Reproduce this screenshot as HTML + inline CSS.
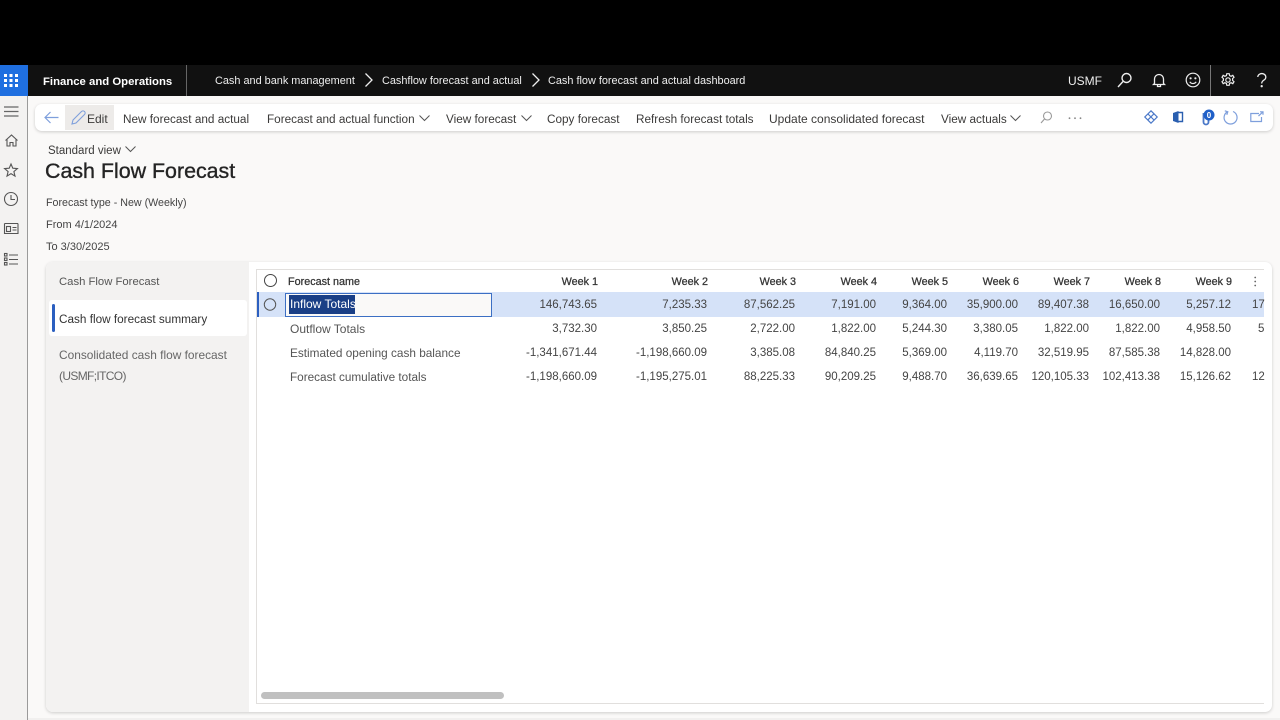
<!DOCTYPE html>
<html><head><meta charset="utf-8"><style>
html,body{margin:0;padding:0;width:1280px;height:720px;overflow:hidden;background:#000}
body{position:relative;font-family:"Liberation Sans",sans-serif;font-size:12px;color:#333}
.a{position:absolute}
.t{position:absolute;white-space:nowrap;line-height:16px;height:16px}
.n{position:absolute;white-space:nowrap;line-height:16px;height:16px;text-align:right;color:#444;width:110px;font-size:11.500px;margin-top:1px}
.h{position:absolute;white-space:nowrap;line-height:16px;height:16px;text-align:right;color:#333;width:80px;font-size:10.800px;-webkit-text-stroke:.25px #333}
.w{color:#eee;font-size:10.900px}
.c{color:#3b3a39;font-size:11.750px}
svg{position:absolute;overflow:visible;fill:none}
</style></head><body>
<!-- page -->
<div class="a" style="left:0;top:65px;width:1280px;height:655px;background:#faf9f8"></div>
<div class="a" style="left:28px;top:718px;width:1252px;height:2px;background:#f1f0ef"></div>
<!-- top bar -->
<div class="a" style="left:0;top:65px;width:1280px;height:31px;background:#111"></div>
<div class="a" style="left:0;top:65px;width:28px;height:31px;background:#1f6fe0"></div>
<svg style="left:0;top:65px" width="28" height="31"><g fill="#fff"><rect x="4" y="9" width="3" height="3"/><rect x="9.500" y="9" width="3" height="3"/><rect x="15" y="9" width="3" height="3"/><rect x="4" y="14" width="3" height="3"/><rect x="9.500" y="14" width="3" height="3"/><rect x="15" y="14" width="3" height="3"/><rect x="4" y="19" width="3" height="3"/><rect x="9.500" y="19" width="3" height="3"/><rect x="15" y="19" width="3" height="3"/></g></svg>
<div class="t" style="left:43px;top:74px;color:#fff;font-weight:bold;font-size:11.350px">Finance and Operations</div>
<div class="a" style="left:186px;top:65px;width:1px;height:31px;background:#666"></div>
<div class="t w" style="left:215px;top:73px">Cash and bank management</div>
<svg style="left:364px;top:72px" width="10" height="16"><path d="M1.500 1.500L8 8L1.500 14.500" stroke="#eee" stroke-width="1.300"/></svg>
<div class="t w" style="left:382px;top:73px">Cashflow forecast and actual</div>
<svg style="left:531px;top:72px" width="10" height="16"><path d="M1.500 1.500L8 8L1.500 14.500" stroke="#eee" stroke-width="1.300"/></svg>
<div class="t w" style="left:548px;top:73px">Cash flow forecast and actual dashboard</div>
<div class="t" style="left:1068px;top:73px;font-size:12px;color:#eee">USMF</div>
<svg style="left:1117px;top:72px" width="16" height="16" stroke="#eee" stroke-width="1.400"><circle cx="9.500" cy="6" r="4.500"/><path d="M6 9.500L1 15"/></svg>
<svg style="left:1152px;top:73px" width="14" height="16" stroke="#eee" stroke-width="1.300"><path d="M2.500 10.500V6a4.500 4.500 0 0 1 9 0V10.500l1 1H1.500zM5.500 12v1.500h3V12"/></svg>
<svg style="left:1185px;top:72px" width="16" height="16" stroke="#eee" stroke-width="1.200"><circle cx="8" cy="8" r="6.800"/><circle cx="5.600" cy="6.300" r=".5" fill="#eee"/><circle cx="10.400" cy="6.300" r=".5" fill="#eee"/><path d="M4.800 9.800a3.800 3.800 0 0 0 6.400 0"/></svg>
<div class="a" style="left:1210px;top:65px;width:1px;height:31px;background:#777"></div>
<svg style="left:1221px;top:73px" width="14" height="14" stroke="#eee" stroke-width="1.200"><circle cx="7" cy="7" r="2.200"/><path d="M5.800 .7h2.400l.4 1.900 1.500.7 1.700-1 1.200 2-1.400 1.300v1.800l1.400 1.300-1.200 2-1.700-1-1.500.7-.4 1.900H5.800l-.4-1.900-1.500-.7-1.700 1-1.200-2 1.400-1.300V5.600L1 4.300l1.200-2 1.700 1 1.500-.7z"/></svg>
<svg style="left:1257px;top:73px" width="10" height="16" stroke="#eee" stroke-width="1.300"><path d="M.8 4a4 3.500 0 1 1 6.200 3C5.500 8 4.700 8.800 4.700 10.500"/><circle cx="4.700" cy="13.200" r=".5" fill="#eee"/></svg>

<!-- left nav -->
<div class="a" style="left:0;top:96px;width:27px;height:624px;background:#f3f2f1"></div>
<div class="a" style="left:27px;top:96px;width:1px;height:624px;background:#9a9a9a"></div>
<svg style="left:4px;top:106px" width="15" height="12" stroke="#666" stroke-width="1.200"><path d="M0 1H14.500M0 5.500H14.500M0 10H14.500"/></svg>
<svg style="left:5px;top:134px" width="13" height="13" stroke="#555" stroke-width="1.100"><path d="M.5 6.500L6.500 1l6 5.500M2 5.500V12h3V8.500h3V12h3V5.500"/></svg>
<svg style="left:4px;top:163px" width="14" height="14" stroke="#555" stroke-width="1.100"><path d="M7 1l1.800 4.200 4.600.4-3.500 3 1.100 4.500L7 10.700 3 13.100l1.100-4.500-3.500-3 4.600-.4z"/></svg>
<svg style="left:4px;top:192px" width="15" height="15" stroke="#555" stroke-width="1.100"><circle cx="7" cy="7" r="6.500"/><path d="M7 3V7.500H11"/></svg>
<svg style="left:4px;top:222px" width="15" height="13" stroke="#555" stroke-width="1.100"><path d="M.5 1.500H14M.5 1.500V11.500H14V1.500"/><rect x="2.500" y="4.500" width="4" height="5"/><path d="M8.500 5.500H12.500M8.500 8H12.500"/></svg>
<svg style="left:4px;top:253px" width="15" height="13" stroke="#555" stroke-width="1.100"><rect x=".5" y=".5" width="2.500" height="2.500"/><rect x=".5" y="5" width="2.500" height="2.500"/><rect x=".5" y="9.500" width="2.500" height="2.500"/><path d="M5 2H14M5 6.500H14M5 11H14"/></svg>

<!-- action pane -->
<div class="a" style="left:35px;top:104px;width:1238px;height:27px;background:#fff;border-radius:7px;box-shadow:0 1px 3px rgba(0,0,0,.18)"></div>
<svg style="left:44px;top:111px" width="16" height="13" stroke="#7e9fdc" stroke-width="1.200"><path d="M14.500 6.500H1M6.500 1L1 6.500L6.500 12"/></svg>
<div class="a" style="left:65px;top:105px;width:49px;height:25px;background:#edebe9"></div>
<svg style="left:71px;top:110px" width="15" height="15" stroke="#7e9fdc" stroke-width="1.100"><path d="M1 14l1-4L10.500 1.500a1.700 1.700 0 0 1 3 3L5 13z"/></svg>
<div class="t c" style="left:87px;top:111px;font-size:12px">Edit</div>
<div class="t c" style="left:123px;top:112px">New forecast and actual</div>
<div class="t c" style="left:267px;top:112px">Forecast and actual function</div>
<svg style="left:419px;top:115px" width="11" height="7" stroke="#555"><path d="M.5 .5L5.500 5.500L10.500 .5"/></svg>
<div class="t c" style="left:446px;top:112px">View forecast</div>
<svg style="left:521px;top:115px" width="11" height="7" stroke="#555"><path d="M.5 .5L5.500 5.500L10.500 .5"/></svg>
<div class="t c" style="left:547px;top:112px">Copy forecast</div>
<div class="t c" style="left:636px;top:112px">Refresh forecast totals</div>
<div class="t c" style="left:769px;top:111px;font-size:12px">Update consolidated forecast</div>
<div class="t c" style="left:941px;top:112px">View actuals</div>
<svg style="left:1010px;top:115px" width="11" height="7" stroke="#555"><path d="M.5 .5L5.500 5.500L10.500 .5"/></svg>
<svg style="left:1040px;top:111px" width="13" height="13" stroke="#999" stroke-width="1.100"><circle cx="7.500" cy="5" r="4"/><path d="M4.500 8L1 12"/></svg>
<svg style="left:1068px;top:117px" width="14" height="3"><circle cx="1.500" cy="1.200" r=".9" fill="#888"/><circle cx="7" cy="1.200" r=".9" fill="#888"/><circle cx="12.500" cy="1.200" r=".9" fill="#888"/></svg>
<svg style="left:1144px;top:110px" width="14" height="14" stroke="#4a78c8" stroke-width="1.200"><path d="M7 .8L13.200 7 7 13.200 .8 7zM7 .8L10 3.800 4 9.800M7 13.200L4 10.200M4 4L10 10"/></svg>
<svg style="left:1172px;top:110px" width="12" height="14"><path d="M1 3L6.500 1V13L1 11z" fill="#2a5fb0"/><path d="M6.500 2.500H10.500V11.500H6.500" stroke="#2a5fb0" stroke-width="1.400"/></svg>
<svg style="left:1201px;top:109px" width="16" height="17"><path d="M2.500 4V13a2.500 2.500 0 0 0 5 0V6" stroke="#4a78c8" stroke-width="1.800"/><circle cx="8" cy="6" r="5.500" fill="#1f5fc8"/><text x="8" y="9" font-size="8" font-weight="bold" fill="#fff" text-anchor="middle" font-family="Liberation Sans">0</text></svg>
<svg style="left:1223px;top:110px" width="15" height="15" stroke="#7e9fdc" stroke-width="1.200"><path d="M4.500 1.800A6.500 6.500 0 1 0 10 1.500M1.800 .8L4.800 1.800 3.800 4.800"/></svg>
<svg style="left:1250px;top:111px" width="14" height="12" stroke="#7e9fdc" stroke-width="1.200"><path d="M9 2.500H.8V10.500H11.500V6M8.500 5L13 .8M10 .8H13V3.800"/></svg>

<!-- header -->
<div class="t c" style="left:48px;top:143px;font-size:11.500px">Standard view</div>
<svg style="left:125px;top:146px" width="11" height="7" stroke="#555"><path d="M.5 .5L5.500 5.500L10.500 .5"/></svg>
<div class="t" style="left:45px;top:158px;font-size:21.400px;line-height:27px;height:27px;color:#242424;-webkit-text-stroke:.35px #242424">Cash Flow Forecast</div>
<div class="t" style="left:46px;top:195px;font-size:10.700px;color:#444">Forecast type - New (Weekly)</div>
<div class="t" style="left:46px;top:217px;font-size:11px;color:#444">From 4/1/2024</div>
<div class="t" style="left:46px;top:239px;font-size:11px;color:#444">To 3/30/2025</div>

<!-- panel -->
<div class="a" style="left:46px;top:262px;width:1226px;height:450px;background:#fff;border-radius:7px;box-shadow:0 1px 3px rgba(0,0,0,.18)"></div>
<div class="a" style="left:46px;top:262px;width:203px;height:450px;background:#f3f2f1;border-radius:7px 0 0 7px"></div>
<div class="a" style="left:49px;top:300px;width:198px;height:36px;background:#fff;border-radius:3px"></div>
<div class="a" style="left:52px;top:304px;width:3px;height:28px;background:#2b5fc0;border-radius:2px"></div>
<div class="t" style="left:59px;top:274px;color:#555;font-size:11.300px">Cash Flow Forecast</div>
<div class="t" style="left:59px;top:312px;color:#333;font-size:11.750px">Cash flow forecast summary</div>
<div class="t" style="left:59px;top:347px;color:#666;font-size:11.900px">Consolidated cash flow forecast</div>
<div class="t" style="left:59px;top:368px;color:#666;font-size:12px;letter-spacing:-.65px">(USMF;ITCO)</div>

<!-- grid -->
<div class="a" style="left:256px;top:269px;width:1012px;height:435px;border:1px solid #e1dfdd;border-right:none;box-sizing:border-box;background:#fff"></div>
<div class="a" style="left:1264px;top:269px;width:8px;height:436px;background:#fff"></div>
<div class="a" style="left:257px;top:292px;width:1007px;height:25px;background:#d5e2f8"></div>
<div class="a" style="left:257px;top:292px;width:2px;height:25px;background:#2b5fc0"></div>
<svg style="left:263px;top:273px" width="15" height="15" stroke="#444"><circle cx="7.500" cy="7.500" r="6"/></svg>
<svg style="left:263px;top:297px" width="15" height="15" stroke="#555"><circle cx="7" cy="7.500" r="5.700"/></svg>
<div class="t" style="left:288px;top:274px;font-size:10.800px;color:#333;-webkit-text-stroke:.25px #333">Forecast name</div>
<div class="a" style="left:285px;top:293px;width:207px;height:24px;box-sizing:border-box;border:1.500px solid #3c6fc4;background:#faf9f8"></div>
<div class="a" style="left:289px;top:295px;width:66px;height:19px;background:#1a3f86"></div>
<div class="t" style="left:290px;top:296px;color:#fff">Inflow Totals</div>
<div class="t" style="left:290px;top:321px;color:#555">Outflow Totals</div>
<div class="t" style="left:290px;top:345px;color:#555;font-size:11.800px">Estimated opening cash balance</div>
<div class="t" style="left:290px;top:370px;color:#555;font-size:11.750px">Forecast cumulative totals</div>

<div class="h" style="left:518px;top:274px">Week 1</div><div class="h" style="left:628px;top:274px">Week 2</div><div class="h" style="left:716px;top:274px">Week 3</div><div class="h" style="left:797px;top:274px">Week 4</div><div class="h" style="left:868px;top:274px">Week 5</div><div class="h" style="left:939px;top:274px">Week 6</div><div class="h" style="left:1010px;top:274px">Week 7</div><div class="h" style="left:1081px;top:274px">Week 8</div><div class="h" style="left:1152px;top:274px">Week 9</div>
<svg style="left:1254px;top:276px" width="3" height="11"><circle cx="1.200" cy="1.500" r=".9" fill="#666"/><circle cx="1.200" cy="5.500" r=".9" fill="#666"/><circle cx="1.200" cy="9.500" r=".9" fill="#666"/></svg>

<div class="n" style="left:487px;top:296px">146,743.65</div><div class="n" style="left:597px;top:296px">7,235.33</div><div class="n" style="left:685px;top:296px">87,562.25</div><div class="n" style="left:766px;top:296px">7,191.00</div><div class="n" style="left:837px;top:296px">9,364.00</div><div class="n" style="left:908px;top:296px">35,900.00</div><div class="n" style="left:979px;top:296px">89,407.38</div><div class="n" style="left:1050px;top:296px">16,650.00</div><div class="n" style="left:1121px;top:296px">5,257.12</div><div class="t" style="left:1252px;top:297px;color:#444;font-size:11.500px">17</div>
<div class="n" style="left:487px;top:320px">3,732.30</div><div class="n" style="left:597px;top:320px">3,850.25</div><div class="n" style="left:685px;top:320px">2,722.00</div><div class="n" style="left:766px;top:320px">1,822.00</div><div class="n" style="left:837px;top:320px">5,244.30</div><div class="n" style="left:908px;top:320px">3,380.05</div><div class="n" style="left:979px;top:320px">1,822.00</div><div class="n" style="left:1050px;top:320px">1,822.00</div><div class="n" style="left:1121px;top:320px">4,958.50</div><div class="t" style="left:1258px;top:321px;color:#444;font-size:11.500px">5</div>
<div class="n" style="left:487px;top:344px">-1,341,671.44</div><div class="n" style="left:597px;top:344px">-1,198,660.09</div><div class="n" style="left:685px;top:344px">3,385.08</div><div class="n" style="left:766px;top:344px">84,840.25</div><div class="n" style="left:837px;top:344px">5,369.00</div><div class="n" style="left:908px;top:344px">4,119.70</div><div class="n" style="left:979px;top:344px">32,519.95</div><div class="n" style="left:1050px;top:344px">87,585.38</div><div class="n" style="left:1121px;top:344px">14,828.00</div>
<div class="n" style="left:487px;top:368px">-1,198,660.09</div><div class="n" style="left:597px;top:368px">-1,195,275.01</div><div class="n" style="left:685px;top:368px">88,225.33</div><div class="n" style="left:766px;top:368px">90,209.25</div><div class="n" style="left:837px;top:368px">9,488.70</div><div class="n" style="left:908px;top:368px">36,639.65</div><div class="n" style="left:979px;top:368px">120,105.33</div><div class="n" style="left:1050px;top:368px">102,413.38</div><div class="n" style="left:1121px;top:368px">15,126.62</div><div class="t" style="left:1252px;top:369px;color:#444;font-size:11.500px">12</div>

<div class="a" style="left:261px;top:692px;width:243px;height:7px;background:#c0c0c0;border-radius:4px"></div>
</body></html>
